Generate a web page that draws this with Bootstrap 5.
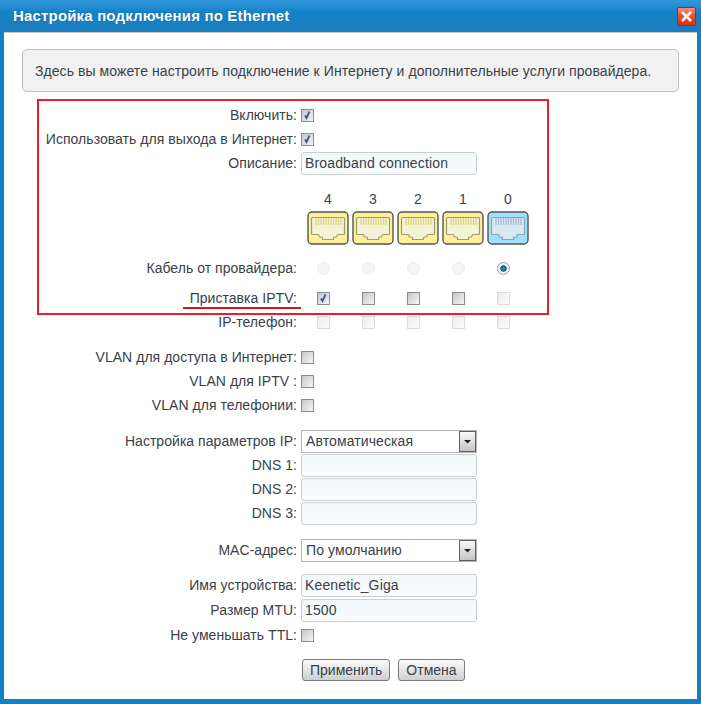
<!DOCTYPE html>
<html lang="ru">
<head>
<meta charset="utf-8">
<title>Настройка подключения по Ethernet</title>
<link rel="stylesheet" href="https://cdn.jsdelivr.net/npm/bootstrap@5.3.0/dist/css/bootstrap.min.css">
<style>
html,body{height:100%;overflow:hidden}
body{background:#1480c4;font:14px/24px "Liberation Sans",Arial,sans-serif;color:#3a4148}
.win-head{height:32px;padding:0 5px 0 13px;background:linear-gradient(#3197dd,#1581c6 40%,#1a7ebf);color:#fff;font-size:15px;font-weight:700;letter-spacing:.17px;text-shadow:0 0 1px rgba(0,40,80,.5)}
.win-close{width:19px;height:19px;padding:0;border:1px solid #c81a08;border-radius:2px;background:linear-gradient(#f58d72,#e34f2b 50%,#d53410);color:#fff;line-height:0;display:flex;align-items:center;justify-content:center}
.win-body{position:relative;height:667px;margin:0 4px;background:#fff;border-top:1px solid #c8c8c8;padding:16px 18px 0;letter-spacing:.04px}
.hint-box{height:43px;padding:0 12px;line-height:42px;background:#f1f1f1;border:1px solid #bfbfbf;border-radius:5px;letter-spacing:.07px}
.field-list{margin:11px -18px 0}
.f-row{display:flex;align-items:center;height:24px}
.f-label{width:293px;margin-right:4px;text-align:right;white-space:nowrap}
.m11{margin-top:11px}.m12{margin-top:12px}.m13{margin-top:13px}.m6{margin-top:6px}.m1{margin-top:1px}
.num-row,.port-row{padding-left:303px;display:flex}
.num-row span{width:45px;padding-right:3px;text-align:center}
.port-row{height:34px}
.port-row svg{display:block;margin-right:3px}
.cell-row{display:flex;padding-left:16px}
.cell-row>span{width:45px;display:flex}
.chk,.chk:checked{appearance:none;-webkit-appearance:none;display:block;flex:none;width:13px;height:13px;margin:0;border:1px solid #8d8d8d;border-radius:0;background:linear-gradient(135deg,#c4c6cc,#f6f6f6)}
.chk:checked{background:url("data:image/svg+xml,%3Csvg xmlns='http://www.w3.org/2000/svg' viewBox='0 0 11 11'%3E%3Cpath d='M3 5.500l1.500 2.500 3-6.500' fill='none' stroke='%23464c9c' stroke-width='1.800'/%3E%3C/svg%3E") center/11px 11px no-repeat,linear-gradient(135deg,#c4c6cc,#f4f4f6)}
.chk:disabled{border-color:#dcdcdc;background:linear-gradient(135deg,#eeeeee,#fbfbfb);opacity:1}
.rad{appearance:none;-webkit-appearance:none;display:block;width:13px;height:13px;margin:0;border:1px solid #ececec;border-radius:50%;background:#f5f5f5}
.rad:checked{border-color:#9a9da2;background:radial-gradient(circle,#1a84c4 0 1.800px,#0a4568 2.800px,#f2f3f4 3.600px)}
.txt,.sel{width:176px;height:23px;padding:0 3px;font:14px "Liberation Sans",Arial,sans-serif;color:#3a4148;outline:0}
.txt{border:1px solid #cbcfd0;border-radius:3px;background:linear-gradient(#f2f7f9,#f9fcfd);letter-spacing:.15px}
.sel{appearance:none;-webkit-appearance:none;padding-left:4px;letter-spacing:.1px;border:1px solid #b5b5b5;border-radius:0;background:#fff url("data:image/svg+xml,%3Csvg xmlns='http://www.w3.org/2000/svg' width='17' height='21'%3E%3Cdefs%3E%3ClinearGradient id='g' x2='0' y2='1'%3E%3Cstop offset='0' stop-color='%23fafafa'/%3E%3Cstop offset='1' stop-color='%23c4c4c4'/%3E%3C/linearGradient%3E%3C/defs%3E%3Crect x='.5' y='.5' width='16' height='20' fill='url(%23g)' stroke='%23606060'/%3E%3Cpath d='M5 9h7l-3.500 3.500z' fill='%23222'/%3E%3C/svg%3E") right 0 center no-repeat}
.act-row{padding-left:298px;display:flex;gap:8px}
.act{height:22px;padding:0 7px;border:1px solid #7d7d7d;border-radius:3px;background:linear-gradient(#fbfbfb,#cfcfcf);font:14px/20px "Liberation Sans",Arial,sans-serif;color:#3a4148}
.red-frame{position:absolute;left:33px;top:66px;width:512px;height:216px;border:2px solid #ed1c2e;pointer-events:none}
.red-under{position:absolute;left:179px;top:274px;width:118px;height:2px;background:#d7141f}
.port-y{--tile:#fff09a;--plug:#f5f2d6;--edge:#9e9c7c;--pin:#dcd482}
.port-b{--tile:#a0e0ff;--plug:#d9e9f2;--edge:#8ea3b0;--pin:#a8bcd4}
</style>
</head>
<body>
<svg width="0" height="0" class="position-absolute">
<symbol id="rj" viewBox="0 0 42 34">
<rect x="1" y="1" width="40" height="32" rx="4" style="fill:var(--tile)" stroke="#55564f" stroke-width="1.400"/>
<path d="M4.500 7.500Q4.500 6.500 5.500 6.500H36.500Q37.500 6.500 37.500 7.500V22.500Q37.500 23.500 36.500 23.500H31Q30 23.500 30 24.500V25Q30 26 29 26H27.500Q26.500 26 26.500 27V28.500H15.500V27Q15.500 26 14.500 26H13Q12 26 12 25V24.500Q12 23.500 11 23.500H5.500Q4.500 23.500 4.500 22.500Z" style="fill:var(--plug);stroke:var(--edge)" stroke-width="1.200"/>
<path d="M9 7v7M11.500 7v7M14 7v7M16.500 7v7M19 7v7M21.500 7v7M24 7v7M26.500 7v7M29 7v7M31.500 7v7M34 7v7" style="stroke:var(--pin)" stroke-width="1.300"/>
</symbol>
</svg>
<div class="win-head d-flex align-items-center justify-content-between">
<span>Настройка подключения по Ethernet</span>
<button type="button" class="win-close" aria-label="Закрыть"><svg width="13" height="13" viewBox="0 0 13 13"><path d="M2 2l9 9M11 2l-9 9" stroke="#fff" stroke-width="2.600"/></svg></button>
</div>
<div class="win-body">
<div class="hint-box">Здесь вы можете настроить подключение к Интернету и дополнительные услуги провайдера.</div>
<div class="field-list">
<div class="f-row"><span class="f-label">Включить:</span><input class="chk" type="checkbox" checked></div>
<div class="f-row"><span class="f-label">Использовать для выхода в Интернет:</span><input class="chk" type="checkbox" checked></div>
<div class="f-row"><span class="f-label">Описание:</span><input class="txt" type="text" value="Broadband connection"></div>
<div class="f-row m12 num-row"><span>4</span><span>3</span><span>2</span><span>1</span><span>0</span></div>
<div class="port-row">
<svg class="port-y" width="42" height="34"><use href="#rj"/></svg>
<svg class="port-y" width="42" height="34"><use href="#rj"/></svg>
<svg class="port-y" width="42" height="34"><use href="#rj"/></svg>
<svg class="port-y" width="42" height="34"><use href="#rj"/></svg>
<svg class="port-b" width="42" height="34"><use href="#rj"/></svg>
</div>
<div class="f-row m11"><span class="f-label">Кабель от провайдера:</span><div class="cell-row"><span><input class="rad" type="radio" name="w" disabled></span><span><input class="rad" type="radio" name="w" disabled></span><span><input class="rad" type="radio" name="w" disabled></span><span><input class="rad" type="radio" name="w" disabled></span><span><input class="rad" type="radio" name="w" checked disabled></span></div></div>
<div class="f-row m6"><span class="f-label">Приставка IPTV:</span><div class="cell-row"><span><input class="chk" type="checkbox" checked></span><span><input class="chk" type="checkbox"></span><span><input class="chk" type="checkbox"></span><span><input class="chk" type="checkbox"></span><span><input class="chk" type="checkbox" disabled></span></div></div>
<div class="f-row"><span class="f-label">IP-телефон:</span><div class="cell-row"><span><input class="chk" type="checkbox" disabled></span><span><input class="chk" type="checkbox" disabled></span><span><input class="chk" type="checkbox" disabled></span><span><input class="chk" type="checkbox" disabled></span><span><input class="chk" type="checkbox" disabled></span></div></div>
<div class="f-row m11"><span class="f-label">VLAN для доступа в Интернет:</span><input class="chk" type="checkbox"></div>
<div class="f-row"><span class="f-label">VLAN для IPTV :</span><input class="chk" type="checkbox"></div>
<div class="f-row"><span class="f-label">VLAN для телефонии:</span><input class="chk" type="checkbox"></div>
<div class="f-row m12"><span class="f-label">Настройка параметров IP:</span><select class="sel"><option>Автоматическая</option></select></div>
<div class="f-row"><span class="f-label">DNS 1:</span><input class="txt" type="text"></div>
<div class="f-row"><span class="f-label">DNS 2:</span><input class="txt" type="text"></div>
<div class="f-row"><span class="f-label">DNS 3:</span><input class="txt" type="text"></div>
<div class="f-row m13"><span class="f-label">MAC-адрес:</span><select class="sel"><option>По умолчанию</option></select></div>
<div class="f-row m11"><span class="f-label">Имя устройства:</span><input class="txt" type="text" value="Keenetic_Giga"></div>
<div class="f-row m1"><span class="f-label">Размер MTU:</span><input class="txt" type="text" value="1500"></div>
<div class="f-row m1"><span class="f-label">Не уменьшать TTL:</span><input class="chk" type="checkbox"></div>
<div class="f-row m11 act-row"><button type="button" class="act">Применить</button><button type="button" class="act">Отмена</button></div>
</div>
<div class="red-frame"></div>
<div class="red-under"></div>
</div>
<script src="https://cdn.jsdelivr.net/npm/bootstrap@5.3.0/dist/js/bootstrap.bundle.min.js"></script>
</body>
</html>
